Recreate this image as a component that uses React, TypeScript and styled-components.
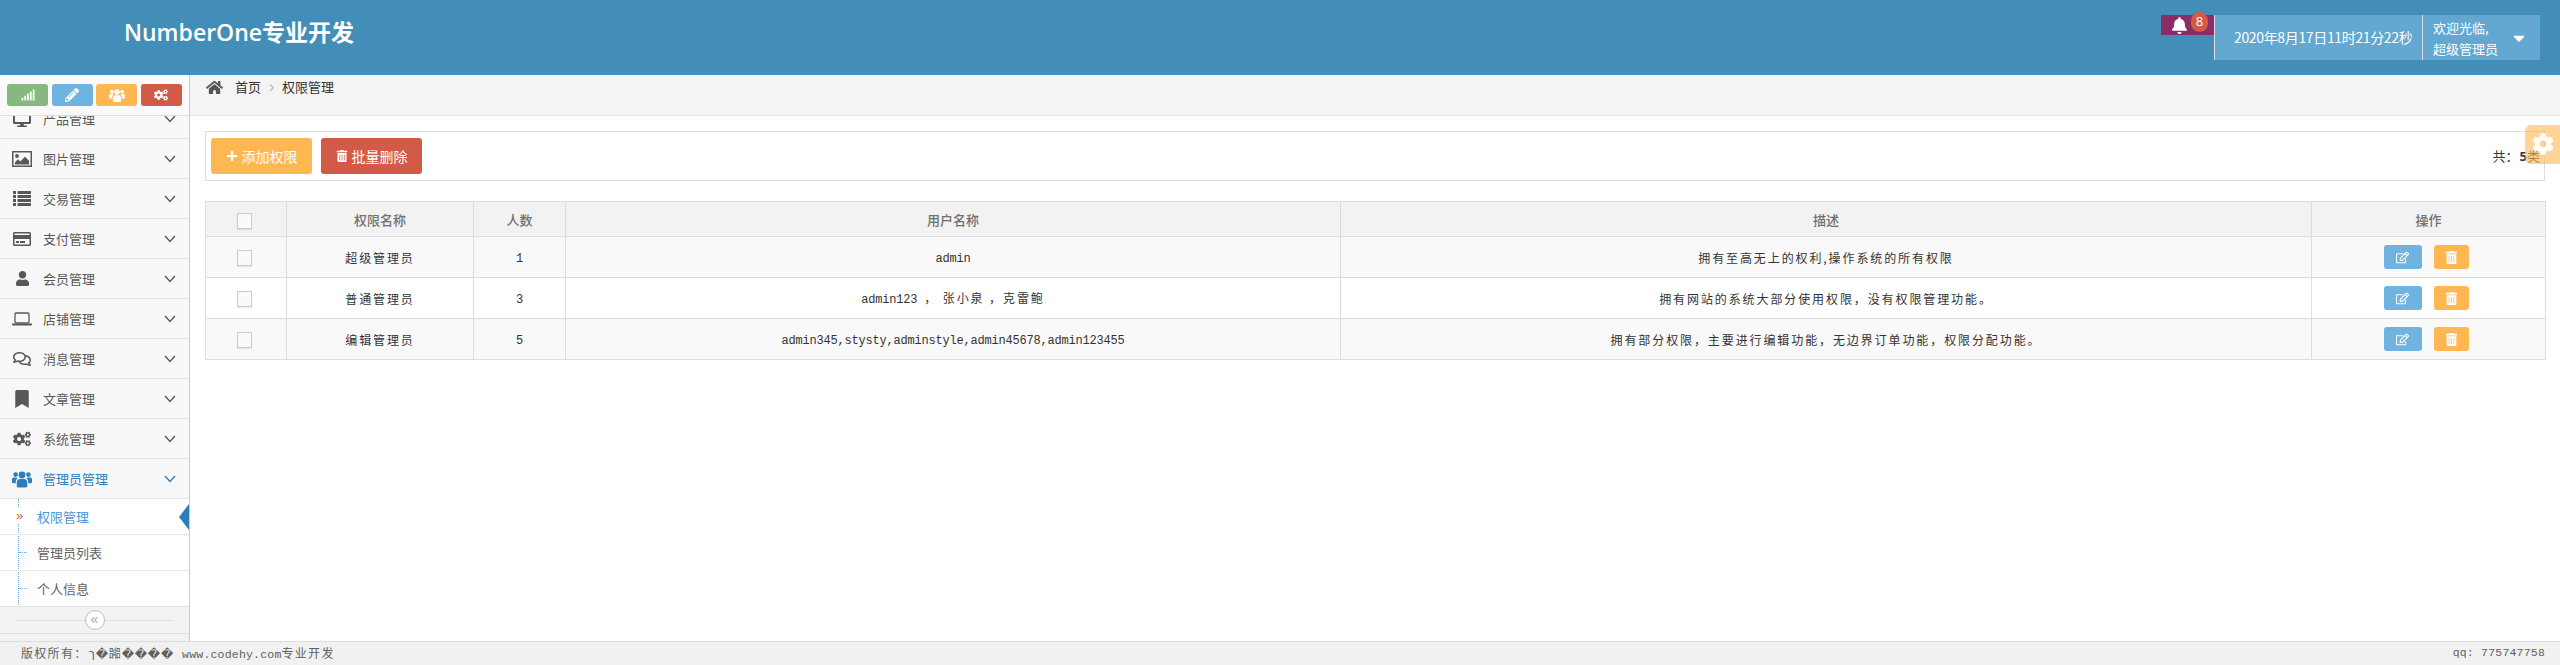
import * as React from "react";
import styled, { createGlobalStyle } from "styled-components";
import {
  FaBell, FaBookmark, FaCaretDown, FaCog, FaCogs, FaDesktop, FaHome,
  FaPencilAlt, FaPlus, FaRegComments, FaRegCreditCard, FaRegEdit, FaSignal,
  FaTrashAlt, FaUser,
} from "react-icons/fa";

const SANS = `"Open Sans", "Noto Sans CJK SC", sans-serif`;
const CJK = `"Noto Sans CJK SC", "Liberation Sans", sans-serif`;
const MONO = `"Liberation Mono", "Noto Sans CJK SC", monospace`;

const GlobalStyle = createGlobalStyle`
  html, body, #root {
    height: 100%;
    margin: 0;
  }
  body {
    font-family: ${SANS};
    font-size: 13px;
    color: #393939;
    background: #fff;
    overflow: hidden;
  }
`;

const Page = styled.div`
  height: 100%;
  display: flex;
  flex-direction: column;
  position: relative;
`;

const Header = styled.header`
  height: 75px;
  flex: none;
  background: #438eb9;
  display: flex;
  justify-content: space-between;
  align-items: flex-start;
  padding-right: 20px;
`;

const Brand = styled.div`
  margin: 16px 0 0 124px;
  font-family: ${SANS};
  font-size: 23px;
  line-height: 32px;
  font-weight: 600;
  color: #fff;
`;

const HeaderTools = styled.div`
  display: flex;
  align-items: flex-start;
  margin-top: 15px;
`;

const BellBox = styled.div`
  width: 53px;
  height: 20px;
  background: #892e65;
  color: #fff;
  position: relative;
  font-size: 17px;
  display: flex;
  align-items: center;
  padding-left: 10px;
  box-sizing: border-box;
`;

const Badge = styled.span`
  position: absolute;
  left: 30px;
  top: -3px;
  width: 17px;
  height: 20px;
  border-radius: 9px;
  background: #d15b47;
  font-size: 13px;
  line-height: 19px;
  text-align: center;
`;

const DateBox = styled.div`
  width: 208px;
  height: 45px;
  box-sizing: border-box;
  background: #62a8d1;
  border-left: 1px solid #ddd;
  color: #fff;
  font-family: ${CJK};
  font-size: 14px;
  line-height: 45px;
  padding-left: 19px;
  letter-spacing: -0.35px;
`;

const UserBox = styled.div`
  width: 118px;
  height: 45px;
  box-sizing: border-box;
  background: #62a8d1;
  border-left: 1px solid #ddd;
  color: #fff;
  font-family: ${CJK};
  font-size: 13px;
  line-height: 21px;
  padding: 2px 0 0 10px;
  display: flex;
  justify-content: space-between;
`;

const CaretIcon = styled.span`
  font-size: 18px;
  line-height: 18px;
  margin: 12px 12px 0 0;
`;

const Main = styled.div`
  flex: 1;
  display: flex;
  min-height: 0;
`;

const Sidebar = styled.aside`
  width: 190px;
  flex: none;
  box-sizing: border-box;
  border-right: 1px solid #ccc;
  background: #f2f2f2;
  display: flex;
  flex-direction: column;
`;

const Shortcuts = styled.div`
  height: 41px;
  flex: none;
  box-sizing: border-box;
  background: #fafafa;
  border-bottom: 1px solid #ddd;
  display: flex;
  gap: 3.5px;
  padding: 9px 0 0 7px;
`;

const Shortcut = styled.span<{ $bg: string }>`
  width: 41px;
  height: 22px;
  border-radius: 3px;
  background: ${(p) => p.$bg};
  color: #fff;
  font-size: 14px;
  display: flex;
  align-items: center;
  justify-content: center;
`;

const MenuScroll = styled.div`
  height: 491px;
  flex: none;
  overflow: hidden;
`;

const MenuList = styled.ul`
  list-style: none;
  margin: -17px 0 0;
  padding: 0;
`;

const MenuRow = styled.li<{ $active?: boolean }>`
  height: 40px;
  box-sizing: border-box;
  border-bottom: 1px solid #e5e5e5;
  background: #f8f8f8;
  display: flex;
  align-items: center;
  padding-left: 12px;
  font-family: ${CJK};
  font-size: 13px;
  color: ${(p) => (p.$active ? "#2b7dbc" : "#585858")};
`;

const MenuIcon = styled.span`
  width: 20px;
  margin-right: 11px;
  display: flex;
  justify-content: center;
  font-size: 18px;
`;

const MenuLabel = styled.span`
  flex: 1;
`;

const Chevron = styled.svg`
  width: 12px;
  height: 8px;
  margin-right: 13px;
  fill: none;
  stroke: currentColor;
  stroke-width: 1.4;
`;

const SubList = styled.ul`
  list-style: none;
  margin: 0;
  padding: 0;
  background: #fff;
  position: relative;
  &::before {
    content: "";
    position: absolute;
    left: 18px;
    top: 0;
    bottom: 0;
    border-left: 1px dotted #6fa8d8;
  }
`;

const SubRow = styled.li<{ $active?: boolean; $last?: boolean }>`
  height: 36px;
  box-sizing: border-box;
  padding-left: 37px;
  line-height: 36px;
  font-family: ${CJK};
  font-size: 13px;
  color: ${(p) => (p.$active ? "#4b98d8" : "#616161")};
  border-bottom: 1px ${(p) => (p.$last ? "solid #e0e0e0" : "dotted #d8d8d8")};
  position: relative;
  &::before {
    content: "";
    position: absolute;
    left: 19px;
    top: 17px;
    width: 8px;
    border-top: 1px dotted ${(p) => (p.$active ? "transparent" : "#6fa8d8")};
  }
`;

const ActiveMark = styled.span`
  position: absolute;
  left: 15px;
  top: 9px;
  width: 9px;
  height: 16px;
  background: #fff;
  color: #d15b47;
  font-family: "Liberation Sans", sans-serif;
  font-size: 13px;
  line-height: 15px;
  text-align: center;
`;

const ActiveArrow = styled.span`
  position: absolute;
  right: 0;
  top: 5px;
  width: 0;
  height: 0;
  border: 13px solid transparent;
  border-left-width: 0;
  border-right: 10px solid #2b7dbc;
`;

const Collapse = styled.div`
  height: 27px;
  flex: none;
  box-sizing: border-box;
  background: #f3f3f3;
  border-bottom: 1px solid #e0e0e0;
  display: flex;
  align-items: center;
  padding: 0 15px;
`;

const CollapseLine = styled.span`
  flex: 1;
  border-top: 1px solid #e0e0e0;
`;

const CollapseButton = styled.span`
  width: 20px;
  height: 20px;
  box-sizing: border-box;
  border: 1px solid #bbb;
  border-radius: 50%;
  background: #fff;
  color: #aaa;
  font-family: "Liberation Sans", sans-serif;
  font-size: 14px;
  line-height: 16px;
  text-align: center;
`;

const Content = styled.main`
  flex: 1;
  min-width: 0;
  display: flex;
  flex-direction: column;
`;

const Breadcrumb = styled.div`
  height: 41px;
  flex: none;
  box-sizing: border-box;
  background: #f4f4f4;
  border-bottom: 1px solid #e5e5e5;
  display: flex;
  align-items: flex-start;
  padding-left: 16px;
  font-family: ${CJK};
  font-size: 13px;
  line-height: 24px;
  color: #333;
`;

const HomeIcon = styled.span`
  font-size: 17px;
  color: #555;
  width: 29px;
  height: 24px;
  display: flex;
  align-items: center;
`;

const CrumbSep = styled.span`
  color: #b2b6bf;
  width: 21px;
  text-align: center;
  font-family: "Liberation Sans", sans-serif;
  font-size: 17px;
`;

const Toolbar = styled.div`
  margin: 15px 15px 0;
  height: 50px;
  box-sizing: border-box;
  border: 1px solid #ddd;
  padding: 6px 4px 0 5px;
  display: flex;
  align-items: flex-start;
  justify-content: space-between;
`;

const ToolbarLeft = styled.div`
  display: flex;
  gap: 9px;
`;

const ToolButton = styled.a<{ $bg: string }>`
  width: 101px;
  height: 36px;
  border-radius: 3px;
  background: ${(p) => p.$bg};
  color: #fff;
  font-family: ${CJK};
  font-size: 14px;
  display: flex;
  align-items: center;
  justify-content: center;
  gap: 4px;
  svg {
    font-size: 12px;
  }
`;

const Total = styled.div`
  font-family: ${CJK};
  font-size: 13px;
  line-height: 36px;
  color: #393939;
  b {
    margin-left: 1px;
    font-family: ${SANS};
  }
`;

const PermTable = styled.table`
  margin: 20px 15px 0;
  width: 2340px;
  table-layout: fixed;
  border-collapse: collapse;
`;

const HeadCell = styled.th`
  height: 34px;
  padding: 0;
  background: #f2f2f2;
  border: 1px solid #ddd;
  color: #707070;
  font-family: ${CJK};
  font-size: 13px;
  font-weight: 500;
  text-align: center;
`;

const Row = styled.tr<{ $odd: boolean }>`
  background: ${(p) => (p.$odd ? "#f9f9f9" : "#fff")};
`;

const Cell = styled.td`
  height: 40px;
  padding: 0;
  border: 1px solid #ddd;
  color: #333;
  font-family: ${CJK};
  font-size: 12px;
  letter-spacing: 1.9px;
  text-align: center;
`;

const Mono = styled.span`
  font-family: ${MONO};
  font-size: 12px;
  letter-spacing: -0.2px;
`;

const CheckBox = styled.span`
  display: inline-block;
  width: 15px;
  height: 16px;
  margin-right: 3px;
  box-sizing: border-box;
  border: 1px solid #ccc;
  background: #fafafa;
  box-shadow: 0 1px 1px rgba(0, 0, 0, 0.08);
  vertical-align: middle;
`;

const Actions = styled.div`
  display: flex;
  justify-content: center;
  gap: 12px;
  padding-right: 5px;
`;

const ActionButton = styled.a<{ $bg: string; $w: number }>`
  width: ${(p) => p.$w}px;
  height: 24px;
  border-radius: 3px;
  background: ${(p) => p.$bg};
  color: #fff;
  font-size: 13px;
  display: flex;
  align-items: center;
  justify-content: center;
`;

const Footer = styled.footer`
  height: 24px;
  flex: none;
  box-sizing: border-box;
  background: #f1f1f1;
  border-top: 1px solid #ddd;
  display: flex;
  justify-content: space-between;
  padding: 0 15px 0 21px;
  font-family: ${CJK};
  font-size: 12px;
  line-height: 22px;
  letter-spacing: 1.3px;
  color: #5f5f5f;
`;

const FooterMono = styled.span`
  font-family: ${MONO};
  font-size: 11.5px;
  letter-spacing: 0.2px;
`;

const Garbled = styled.span`
  font-family: "DejaVu Sans", "Noto Sans CJK SC", sans-serif;
  font-size: 12px;
  letter-spacing: 0.8px;
  margin: 0 8px 0 -3px;
`;

const SettingsTab = styled.div`
  position: absolute;
  right: 0;
  top: 125px;
  width: 35px;
  height: 39px;
  border-radius: 6px 0 0 6px;
  background: rgba(255, 183, 82, 0.6);
  color: #fff;
  font-size: 22px;
  display: flex;
  align-items: center;
  justify-content: center;
  padding-bottom: 2px;
  box-sizing: border-box;
`;

const UsersIcon = ({ size }: { size: number }) => (
  <svg width={size} height={size * 0.9} viewBox="0 0 20 18" fill="currentColor">
    <circle cx="10" cy="5" r="3.4" />
    <path d="M4.8 17v-4.6C4.8 10.2 6.4 9 8 9h4c1.6 0 3.2 1.2 3.2 3.4V17c-1.4.8-9 .8-10.4 0z" />
    <circle cx="3.6" cy="4.6" r="2.3" />
    <circle cx="16.4" cy="4.6" r="2.3" />
    <path d="M0 12.6V9.4C0 8 1 7.4 2 7.4h2.6c.3.5.7.9 1.1 1.2-1.3.6-2 1.9-2 3.6v1.3C2 13.5.6 13.2 0 12.6z" />
    <path d="M20 12.6V9.4C20 8 19 7.4 18 7.4h-2.6c-.3.5-.7.9-1.1 1.2 1.3.6 2 1.9 2 3.6v1.3c1.7 0 3.1-.3 3.7-.9z" />
  </svg>
);

const ListIcon = () => (
  <svg width="18" height="15" viewBox="0 0 18 15" fill="currentColor">
    {[0, 4, 8, 12].map((y) => (
      <g key={y}>
        <rect x="0" y={y} width="3" height="3" />
        <rect x="4.5" y={y} width="13.5" height="3" />
      </g>
    ))}
  </svg>
);

const PictureIcon = () => (
  <svg width="20" height="16" viewBox="0 0 20 16">
    <rect x="0.75" y="0.75" width="18.5" height="14.5" fill="none" stroke="currentColor" strokeWidth="1.5" />
    <circle cx="5" cy="5" r="1.9" fill="currentColor" />
    <path d="M3 13.5v-2.2l3-3 2.2 2.2L13 5.7l4 4v3.8z" fill="currentColor" />
  </svg>
);

const LaptopIcon = () => (
  <svg width="20" height="14" viewBox="0 0 20 14">
    <rect x="3" y="1" width="14" height="10" rx="1" fill="none" stroke="currentColor" strokeWidth="1.3" />
    <path d="M0 11.6h20v.6c0 .9-.7 1.4-1.4 1.4H1.4C.7 13.6 0 13.1 0 12.2z" fill="currentColor" />
  </svg>
);

const menuItems = [
  { label: "产品管理", icon: <FaDesktop /> },
  { label: "图片管理", icon: <PictureIcon /> },
  { label: "交易管理", icon: <ListIcon /> },
  { label: "支付管理", icon: <FaRegCreditCard /> },
  { label: "会员管理", icon: <FaUser size={15} /> },
  { label: "店铺管理", icon: <LaptopIcon /> },
  { label: "消息管理", icon: <FaRegComments /> },
  { label: "文章管理", icon: <FaBookmark /> },
  { label: "系统管理", icon: <FaCogs /> },
  { label: "管理员管理", icon: <UsersIcon size={20} />, active: true },
];

const colWidths = [81, 187, 92, 775, 971, 234];
const heads = ["权限名称", "人数", "用户名称", "描述", "操作"];

const rows = [
  {
    name: "超级管理员",
    count: "1",
    users: <Mono>admin</Mono>,
    desc: "拥有至高无上的权利,操作系统的所有权限",
  },
  {
    name: "普通管理员",
    count: "3",
    users: (
      <>
        <Mono>admin123 </Mono>， 张小泉 ，克雷鲍
      </>
    ),
    desc: "拥有网站的系统大部分使用权限，没有权限管理功能。",
  },
  {
    name: "编辑管理员",
    count: "5",
    users: <Mono>admin345,stysty,adminstyle,admin45678,admin123455</Mono>,
    desc: "拥有部分权限，主要进行编辑功能，无边界订单功能，权限分配功能。",
  },
];

const ChevronDown = () => (
  <Chevron viewBox="0 0 12 8">
    <polyline points="1,1 6,6.5 11,1" />
  </Chevron>
);

const Menu = () => (
  <MenuScroll>
    <MenuList>
      {menuItems.map((item) => (
        <MenuRow key={item.label} $active={item.active}>
          <MenuIcon>{item.icon}</MenuIcon>
          <MenuLabel>{item.label}</MenuLabel>
          <ChevronDown />
        </MenuRow>
      ))}
    </MenuList>
    <SubList>
      <SubRow $active>
        <ActiveMark>»</ActiveMark>
        权限管理
        <ActiveArrow />
      </SubRow>
      <SubRow>管理员列表</SubRow>
      <SubRow $last>个人信息</SubRow>
    </SubList>
  </MenuScroll>
);

export default function App() {
  return (
    <Page>
      <GlobalStyle />
      <Header>
        <Brand>NumberOne专业开发</Brand>
        <HeaderTools>
          <BellBox>
            <FaBell />
            <Badge>8</Badge>
          </BellBox>
          <DateBox>2020年8月17日11时21分22秒</DateBox>
          <UserBox>
            <div>
              欢迎光临,
              <br />
              超级管理员
            </div>
            <CaretIcon>
              <FaCaretDown />
            </CaretIcon>
          </UserBox>
        </HeaderTools>
      </Header>
      <Main>
        <Sidebar>
          <Shortcuts>
            <Shortcut $bg="#87b87f"><FaSignal /></Shortcut>
            <Shortcut $bg="#6fb3e0"><FaPencilAlt /></Shortcut>
            <Shortcut $bg="#ffb752"><UsersIcon size={16} /></Shortcut>
            <Shortcut $bg="#d15b47"><FaCogs /></Shortcut>
          </Shortcuts>
          <Menu />
          <Collapse>
            <CollapseLine />
            <CollapseButton>«</CollapseButton>
            <CollapseLine />
          </Collapse>
        </Sidebar>
        <Content>
          <Breadcrumb>
            <HomeIcon><FaHome /></HomeIcon>
            首页
            <CrumbSep>›</CrumbSep>
            权限管理
          </Breadcrumb>
          <Toolbar>
            <ToolbarLeft>
              <ToolButton $bg="#ffb752"><FaPlus />添加权限</ToolButton>
              <ToolButton $bg="#d15b47"><FaTrashAlt />批量删除</ToolButton>
            </ToolbarLeft>
            <Total>共：<b>5</b>类</Total>
          </Toolbar>
          <PermTable>
            <colgroup>
              {colWidths.map((w, i) => (
                <col key={i} width={w} />
              ))}
            </colgroup>
            <thead>
              <tr>
                <HeadCell><CheckBox /></HeadCell>
                {heads.map((h) => (
                  <HeadCell key={h}>{h}</HeadCell>
                ))}
              </tr>
            </thead>
            <tbody>
              {rows.map((r, i) => (
                <Row key={r.name} $odd={i % 2 === 0}>
                  <Cell><CheckBox /></Cell>
                  <Cell>{r.name}</Cell>
                  <Cell><Mono>{r.count}</Mono></Cell>
                  <Cell>{r.users}</Cell>
                  <Cell>{r.desc}</Cell>
                  <Cell>
                    <Actions>
                      <ActionButton $bg="#6fb3e0" $w={38}><FaRegEdit /></ActionButton>
                      <ActionButton $bg="#ffb752" $w={35}><FaTrashAlt /></ActionButton>
                    </Actions>
                  </Cell>
                </Row>
              ))}
            </tbody>
          </PermTable>
        </Content>
      </Main>
      <Footer>
        <div>
          版权所有： <Garbled>ך�嘂����</Garbled>
          <FooterMono>www.codehy.com</FooterMono>专业开发
        </div>
        <FooterMono>qq: 775747758</FooterMono>
      </Footer>
      <SettingsTab><FaCog /></SettingsTab>
    </Page>
  );
}
